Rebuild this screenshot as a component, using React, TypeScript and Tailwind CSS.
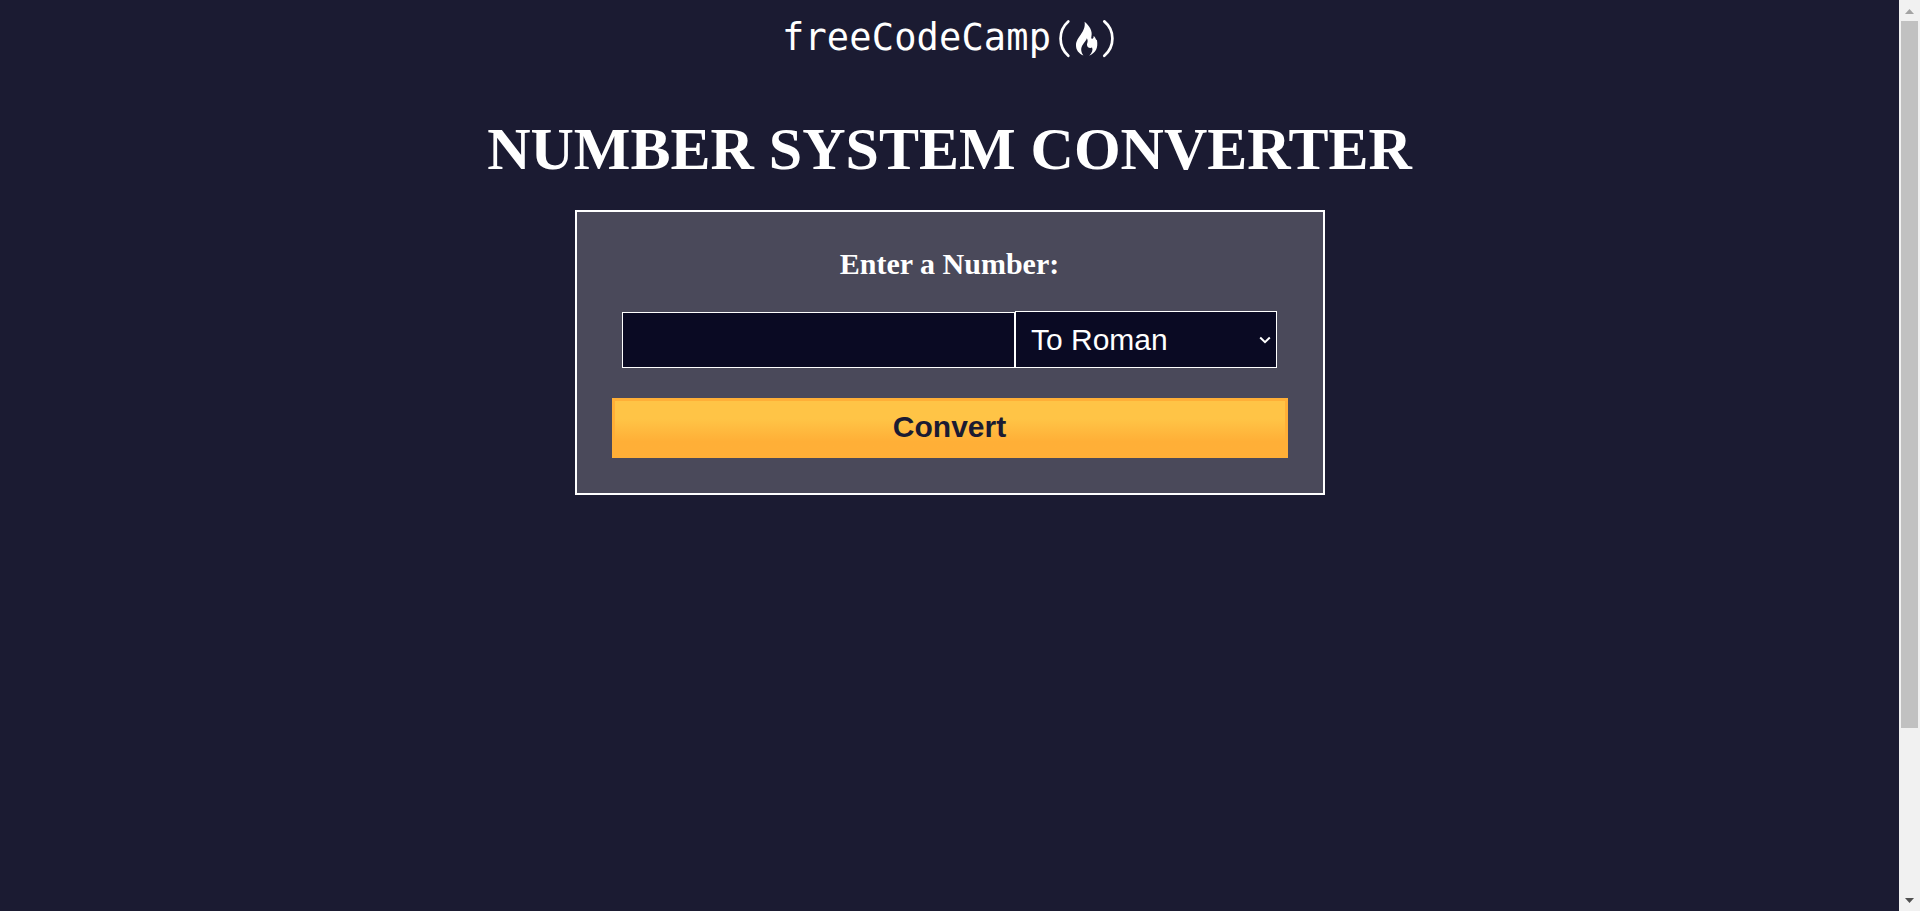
import React from "react";

function Flame() {
  return (
    <svg viewBox="0 0 60 42" className="h-[42px] w-[60px]" fill="none">
      <path d="M13.3 4.4 C3 13.4 3 29.8 13.3 38.8" stroke="#fff" strokeWidth="2.7" strokeLinecap="round" />
      <path d="M49.3 4.4 C60.1 13.4 60.1 29.8 49.3 38.8" stroke="#fff" strokeWidth="2.7" strokeLinecap="round" />
      <path
        transform="translate(1 1)"
        d="M28.6 3.8 C33.4 8 36.8 13 35.4 18.4 C34.9 20.4 35.8 21.2 36.8 20.6 C37.6 20.1 37.7 19 37.5 18 C40.2 19.5 39 21.3 41 22.2 C42.2 30 40 34.5 33.2 37.8 C36.2 34.8 37.2 31.8 36 29.6 C33.6 30.6 31.2 29.4 31 27 C30.9 24.8 32.6 23.4 30.8 20.2 C30.3 23.2 25.5 26.4 25.2 31 C25.1 33.6 26 35.6 27.4 37.4 C22.6 35.4 20 31.8 20 27.4 C20 19 30.2 14.4 28.6 3.8 Z"
        fill="#fff"
      />
    </svg>
  );
}

function Logo() {
  return (
    <div className="flex h-[58px] items-start justify-center pt-[17px]">
      <span className="-ml-[2px] w-[273px] whitespace-nowrap font-['DejaVu_Sans_Mono',monospace] text-[37px] leading-[42px] tracking-[0.15px] text-white">
        freeCodeCamp
      </span>
      <Flame />
    </div>
  );
}

function Scrollbar() {
  return (
    <div className="flex w-[21px] shrink-0 flex-col items-center bg-[#f1f1f1]">
      <svg viewBox="0 0 21 21" className="h-[21px] w-[21px]">
        <path d="M6 14 L10.5 9 L15 14 Z" fill="#a3a3a3" />
      </svg>
      <div className="h-[707px] w-[17px] bg-[#c1c1c1]" />
      <svg viewBox="0 0 21 21" className="mt-auto h-[21px] w-[21px]">
        <path d="M6 8 L10.5 13 L15 8 Z" fill="#505050" />
      </svg>
    </div>
  );
}

export default function App() {
  return (
    <div className="flex h-[911px] w-[1920px] overflow-hidden bg-[#1b1b32]">
      <main className="flex flex-1 flex-col items-center">
        <Logo />
        <h1 className="mt-[57px] whitespace-nowrap font-['Liberation_Serif',serif] text-[60px] font-bold leading-[69px] text-white">
          NUMBER SYSTEM CONVERTER
        </h1>
        <form
          className="mt-[26px] flex h-[285px] w-[750px] flex-col items-center border-2 border-white bg-[#4a495a]"
          onSubmit={(e) => e.preventDefault()}
        >
          <label
            htmlFor="number"
            className="mt-[35px] font-['Liberation_Serif',serif] text-[30px] font-bold leading-[34px] text-white"
          >
            Enter a Number:
          </label>
          <div className="mt-[30px] flex items-end">
            <input
              id="number"
              className="h-[56px] w-[393px] border border-white bg-[#0a0a23] px-3 font-['Liberation_Sans',sans-serif] text-[30px] text-white outline-none"
            />
            <div className="relative h-[57px] w-[262px]">
              <select className="block h-full w-full appearance-none border border-white bg-[#0a0a23] pl-[15px] font-['Liberation_Sans',sans-serif] text-[30px] text-white outline-none">
                <option>To Roman</option>
              </select>
              <svg
                viewBox="0 0 12 8"
                className="pointer-events-none absolute right-[6px] top-[25px] h-[8px] w-[12px]"
                fill="none"
              >
                <path d="M1.2 1.5 L6 6.2 L10.8 1.5" stroke="#fff" strokeWidth="2" />
              </svg>
            </div>
          </div>
          <button className="mt-[30px] h-[60px] w-[676px] border-[3px] border-[#ffaf37] bg-linear-to-b from-[#ffc446] from-33% to-[#ffaf37] to-75% pb-[2px] font-['Liberation_Sans',sans-serif] text-[30px] font-bold leading-[34px] text-[#1b1b32]">
            Convert
          </button>
        </form>
      </main>
      <Scrollbar />
    </div>
  );
}
